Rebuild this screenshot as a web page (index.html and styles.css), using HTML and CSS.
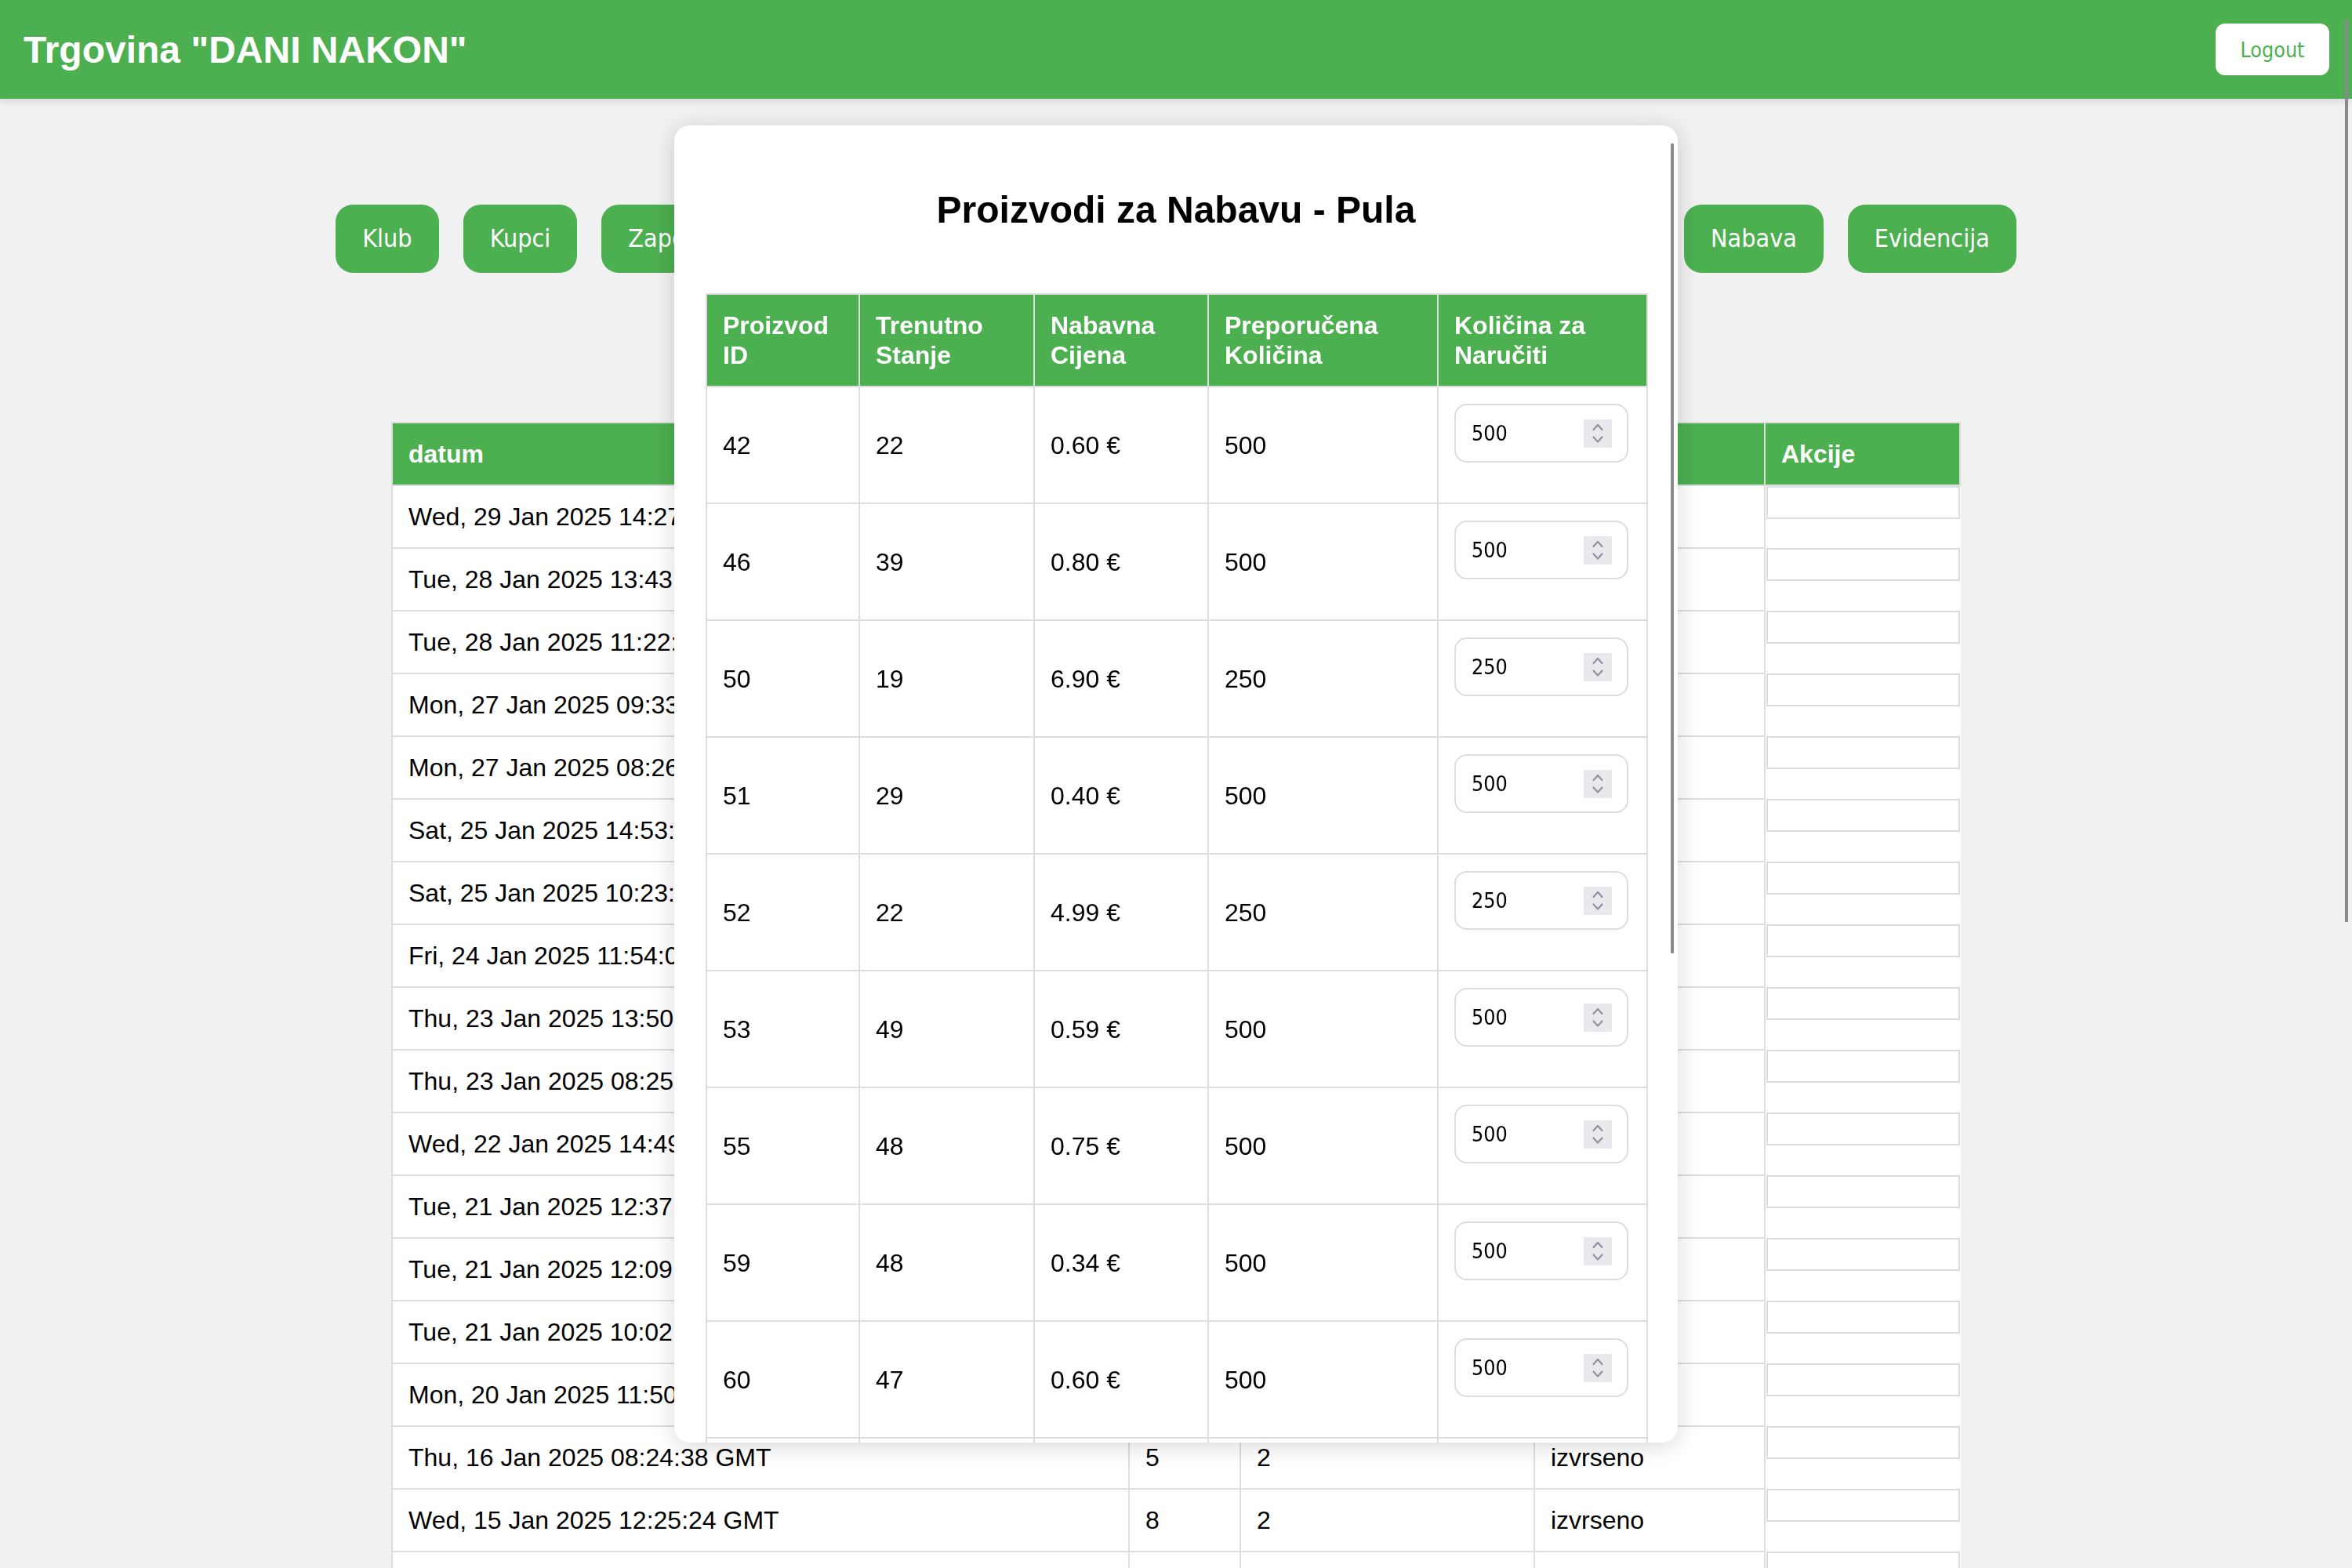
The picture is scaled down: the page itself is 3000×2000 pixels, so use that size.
FILE: index.html
```html
<!DOCTYPE html>
<html lang="hr">
<head>
<meta charset="utf-8">
<title>Trgovina "DANI NAKON"</title>
<link rel="stylesheet" href="styles.css">
</head>
<body>
<header class="topbar">
  <h1 class="brand">Trgovina "DANI NAKON"</h1>
  <button class="logout">Logout</button>
</header>

<main class="page">
  <nav class="nav">
    <button class="nav-btn">Klub</button>
    <button class="nav-btn">Kupci</button>
    <button class="nav-btn">Zaposlenici</button>
    <button class="nav-btn">Proizvodi</button>
    <button class="nav-btn">Prodaja</button>
    <button class="nav-btn">Narudžbe</button>
    <button class="nav-btn">Dobavljači</button>
    <button class="nav-btn">Računi</button>
    <button class="nav-btn">Nabava</button>
    <button class="nav-btn">Evidencija</button>
  </nav>

  <table class="orders">
    <colgroup>
      <col class="c-datum"><col class="c-id"><col class="c-kol"><col class="c-status"><col class="c-akcije">
    </colgroup>
    <thead>
      <tr><th>datum</th><th>ID</th><th>Količina</th><th>Status</th><th>Akcije</th></tr>
    </thead>
    <tbody>
      <tr><td>Wed, 29 Jan 2025 14:27:12 GMT</td><td></td><td></td><td></td><td class="akcije"><div class="akcije-box"></div></td></tr>
      <tr><td>Tue, 28 Jan 2025 13:43:51 GMT</td><td></td><td></td><td></td><td class="akcije"><div class="akcije-box"></div></td></tr>
      <tr><td>Tue, 28 Jan 2025 11:22:05 GMT</td><td></td><td></td><td></td><td class="akcije"><div class="akcije-box"></div></td></tr>
      <tr><td>Mon, 27 Jan 2025 09:33:40 GMT</td><td></td><td></td><td></td><td class="akcije"><div class="akcije-box"></div></td></tr>
      <tr><td>Mon, 27 Jan 2025 08:26:17 GMT</td><td></td><td></td><td></td><td class="akcije"><div class="akcije-box"></div></td></tr>
      <tr><td>Sat, 25 Jan 2025 14:53:29 GMT</td><td></td><td></td><td></td><td class="akcije"><div class="akcije-box"></div></td></tr>
      <tr><td>Sat, 25 Jan 2025 10:23:08 GMT</td><td></td><td></td><td></td><td class="akcije"><div class="akcije-box"></div></td></tr>
      <tr><td>Fri, 24 Jan 2025 11:54:02 GMT</td><td></td><td></td><td></td><td class="akcije"><div class="akcije-box"></div></td></tr>
      <tr><td>Thu, 23 Jan 2025 13:50:44 GMT</td><td></td><td></td><td></td><td class="akcije"><div class="akcije-box"></div></td></tr>
      <tr><td>Thu, 23 Jan 2025 08:25:31 GMT</td><td></td><td></td><td></td><td class="akcije"><div class="akcije-box"></div></td></tr>
      <tr><td>Wed, 22 Jan 2025 14:49:10 GMT</td><td></td><td></td><td></td><td class="akcije"><div class="akcije-box"></div></td></tr>
      <tr><td>Tue, 21 Jan 2025 12:37:56 GMT</td><td></td><td></td><td></td><td class="akcije"><div class="akcije-box"></div></td></tr>
      <tr><td>Tue, 21 Jan 2025 12:09:23 GMT</td><td></td><td></td><td></td><td class="akcije"><div class="akcije-box"></div></td></tr>
      <tr><td>Tue, 21 Jan 2025 10:02:47 GMT</td><td></td><td></td><td></td><td class="akcije"><div class="akcije-box"></div></td></tr>
      <tr><td>Mon, 20 Jan 2025 11:50:19 GMT</td><td></td><td></td><td></td><td class="akcije"><div class="akcije-box"></div></td></tr>
      <tr><td>Thu, 16 Jan 2025 08:24:38 GMT</td><td>5</td><td>2</td><td>izvrseno</td><td class="akcije"><div class="akcije-box"></div></td></tr>
      <tr><td>Wed, 15 Jan 2025 12:25:24 GMT</td><td>8</td><td>2</td><td>izvrseno</td><td class="akcije"><div class="akcije-box"></div></td></tr>
      <tr><td></td><td></td><td></td><td></td><td class="akcije"><div class="akcije-box"></div></td></tr>
    </tbody>
  </table>
</main>

<div class="modal">
  <h2 class="modal-title">Proizvodi za Nabavu - Pula</h2>
  <table class="products">
    <colgroup>
      <col class="p-id"><col class="p-stanje"><col class="p-cijena"><col class="p-prep"><col class="p-kol">
    </colgroup>
    <thead>
      <tr><th>Proizvod ID</th><th>Trenutno Stanje</th><th>Nabavna Cijena</th><th>Preporučena Količina</th><th>Količina za Naručiti</th></tr>
    </thead>
    <tbody>
      <tr><td>42</td><td>22</td><td>0.60 €</td><td>500</td><td><div class="qty-field"><input class="qty-input" type="text" value="500"><span class="spin"><svg viewBox="0 0 36 36" width="36" height="36"><polyline points="12.5,13 18,7 23.5,13"/><polyline points="12.5,22.5 18,28.5 23.5,22.5"/></svg></span></div></td></tr>
      <tr><td>46</td><td>39</td><td>0.80 €</td><td>500</td><td><div class="qty-field"><input class="qty-input" type="text" value="500"><span class="spin"><svg viewBox="0 0 36 36" width="36" height="36"><polyline points="12.5,13 18,7 23.5,13"/><polyline points="12.5,22.5 18,28.5 23.5,22.5"/></svg></span></div></td></tr>
      <tr><td>50</td><td>19</td><td>6.90 €</td><td>250</td><td><div class="qty-field"><input class="qty-input" type="text" value="250"><span class="spin"><svg viewBox="0 0 36 36" width="36" height="36"><polyline points="12.5,13 18,7 23.5,13"/><polyline points="12.5,22.5 18,28.5 23.5,22.5"/></svg></span></div></td></tr>
      <tr><td>51</td><td>29</td><td>0.40 €</td><td>500</td><td><div class="qty-field"><input class="qty-input" type="text" value="500"><span class="spin"><svg viewBox="0 0 36 36" width="36" height="36"><polyline points="12.5,13 18,7 23.5,13"/><polyline points="12.5,22.5 18,28.5 23.5,22.5"/></svg></span></div></td></tr>
      <tr><td>52</td><td>22</td><td>4.99 €</td><td>250</td><td><div class="qty-field"><input class="qty-input" type="text" value="250"><span class="spin"><svg viewBox="0 0 36 36" width="36" height="36"><polyline points="12.5,13 18,7 23.5,13"/><polyline points="12.5,22.5 18,28.5 23.5,22.5"/></svg></span></div></td></tr>
      <tr><td>53</td><td>49</td><td>0.59 €</td><td>500</td><td><div class="qty-field"><input class="qty-input" type="text" value="500"><span class="spin"><svg viewBox="0 0 36 36" width="36" height="36"><polyline points="12.5,13 18,7 23.5,13"/><polyline points="12.5,22.5 18,28.5 23.5,22.5"/></svg></span></div></td></tr>
      <tr><td>55</td><td>48</td><td>0.75 €</td><td>500</td><td><div class="qty-field"><input class="qty-input" type="text" value="500"><span class="spin"><svg viewBox="0 0 36 36" width="36" height="36"><polyline points="12.5,13 18,7 23.5,13"/><polyline points="12.5,22.5 18,28.5 23.5,22.5"/></svg></span></div></td></tr>
      <tr><td>59</td><td>48</td><td>0.34 €</td><td>500</td><td><div class="qty-field"><input class="qty-input" type="text" value="500"><span class="spin"><svg viewBox="0 0 36 36" width="36" height="36"><polyline points="12.5,13 18,7 23.5,13"/><polyline points="12.5,22.5 18,28.5 23.5,22.5"/></svg></span></div></td></tr>
      <tr><td>60</td><td>47</td><td>0.60 €</td><td>500</td><td><div class="qty-field"><input class="qty-input" type="text" value="500"><span class="spin"><svg viewBox="0 0 36 36" width="36" height="36"><polyline points="12.5,13 18,7 23.5,13"/><polyline points="12.5,22.5 18,28.5 23.5,22.5"/></svg></span></div></td></tr>
      <tr><td></td><td></td><td></td><td></td><td></td></tr>
    </tbody>
  </table>
  <div class="modal-scroll"></div>
</div>

<div class="page-scroll"></div>
</body>
</html>
```

FILE: styles.css
```css
html, body {
  margin: 0;
  height: 2000px;
  overflow: hidden;
}

body {
  background: #f1f1f1;
  font-family: "Liberation Sans", Arial, sans-serif;
  color: #000;
}

/* ---------- top bar ---------- */
.topbar {
  position: relative;
  z-index: 2;
  box-sizing: border-box;
  height: 126px;
  padding: 0 29px 0 30px;
  display: flex;
  align-items: center;
  justify-content: space-between;
  background: #4caf50;
  box-shadow: 0 4px 8px rgba(0, 0, 0, 0.1);
}

.brand {
  margin: 0;
  font-size: 48px;
  font-weight: bold;
  color: #fff;
}

.logout {
  box-sizing: border-box;
  width: 145px;
  height: 66px;
  padding: 0;
  border: none;
  border-radius: 12px;
  background: #fff;
  color: #4caf50;
  font: 26.67px "DejaVu Sans Condensed", "DejaVu Sans", sans-serif;
}

/* ---------- navigation ---------- */
.nav {
  display: flex;
  justify-content: center;
  gap: 31px;
  padding-top: 135px;
}

.nav-btn {
  padding: 24px 34px;
  border: none;
  border-radius: 22px;
  background: #4caf50;
  color: #fff;
  font: 32px/39px "DejaVu Sans Condensed", "DejaVu Sans", sans-serif;
}

/* ---------- background table ---------- */
.orders {
  width: 2000px;
  margin: 190px auto 0;
  border-collapse: collapse;
  table-layout: fixed;
  background: #fff;
  font-size: 32px;
  line-height: 38px;
}

.c-datum { width: 940px; }
.c-id { width: 142px; }
.c-kol { width: 375px; }
.c-status { width: 294px; }
.c-akcije { width: 249px; }

.orders th,
.orders td {
  padding: 20px;
  border: 2px solid #ddd;
  text-align: left;
  white-space: nowrap;
  overflow: hidden;
}

.orders th {
  background: #4caf50;
  color: #fff;
}

.orders td.akcije {
  padding: 0 0 0 1px;
  vertical-align: top;
  border-top: none;
  border-bottom: none;
  border-right: none;
}

.akcije-box {
  height: 38px;
  border: 2px solid #ddd;
}

/* ---------- modal ---------- */
.modal {
  position: fixed;
  z-index: 5;
  top: 160px;
  left: 860px;
  width: 1200px;
  height: 1600px;
  padding: 40px;
  overflow: hidden;
  background: #fff;
  border-radius: 20px;
  box-shadow: 0 4px 30px rgba(0, 0, 0, 0.16);
}

.modal-title {
  margin: 40px 0 79px;
  text-align: center;
  font-size: 48px;
  font-weight: bold;
}

.products {
  width: 1200px;
  border-collapse: collapse;
  table-layout: fixed;
  font-size: 32px;
  line-height: 38px;
}

.p-id { width: 195px; }
.p-stanje { width: 223px; }
.p-cijena { width: 222px; }
.p-prep { width: 293px; }
.p-kol { width: 267px; }

.products th,
.products td {
  padding: 20px;
  border: 2px solid #ddd;
  text-align: left;
}

.products th {
  background: #4caf50;
  color: #fff;
}

.qty-field {
  box-sizing: border-box;
  width: 222px;
  height: 75px;
  margin: 1px 0 31px;
  padding: 0 19px 0 20px;
  display: flex;
  align-items: center;
  border: 2px solid #ddd;
  border-radius: 16px;
}

.qty-input {
  flex: 1;
  min-width: 0;
  padding: 0;
  border: none;
  outline: none;
  background: transparent;
  color: #000;
  font: 26.67px "DejaVu Sans Condensed", "DejaVu Sans", sans-serif;
}

.spin {
  display: block;
  width: 36px;
  height: 36px;
  background: #e9e9ed;
}

.spin svg {
  display: block;
  fill: none;
  stroke: #8f8f9d;
  stroke-width: 2.2;
  stroke-linecap: round;
  stroke-linejoin: round;
}

/* ---------- overlay scrollbars ---------- */
.modal-scroll {
  position: absolute;
  top: 23px;
  right: 5px;
  width: 4px;
  height: 1033px;
  background: #8a8a8a;
  border-radius: 1px;
}

.page-scroll {
  position: fixed;
  z-index: 10;
  top: 25px;
  right: 5px;
  width: 4px;
  height: 1151px;
  background: #8a8a8a;
  border-radius: 1px;
}
```
